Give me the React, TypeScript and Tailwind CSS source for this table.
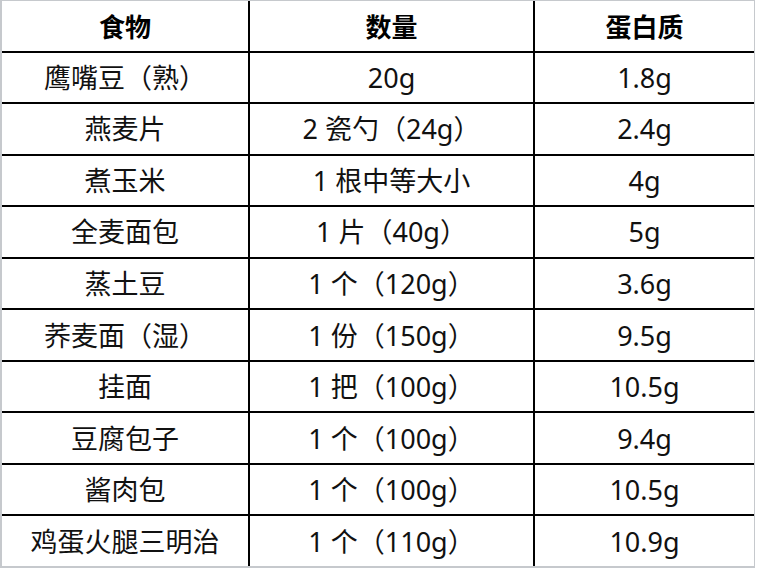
import React from "react";

const rows: [string, string, string][] = [
  ["鹰嘴豆（熟）", "20g", "1.8g"],
  ["燕麦片", "2 瓷勺（24g）", "2.4g"],
  ["煮玉米", "1 根中等大小", "4g"],
  ["全麦面包", "1 片（40g）", "5g"],
  ["蒸土豆", "1 个（120g）", "3.6g"],
  ["荞麦面（湿）", "1 份（150g）", "9.5g"],
  ["挂面", "1 把（100g）", "10.5g"],
  ["豆腐包子", "1 个（100g）", "9.4g"],
  ["酱肉包", "1 个（100g）", "10.5g"],
  ["鸡蛋火腿三明治", "1 个（110g）", "10.9g"],
];

export default function App() {
  return (
    <div className="w-[759px] h-[571px] bg-white">
      <div className="w-[755px] h-[568px] border-l-2 border-t border-r border-b-2 border-[#c6c9cd] bg-white">
        <div className="grid grid-cols-[246px_283px_219px] grid-rows-[repeat(11,1fr)] gap-[2px] bg-black h-full text-black">
          {["食物", "数量", "蛋白质"].map((h) => (
            <div
              key={h}
              className="bg-white flex items-center justify-center text-[26px] font-bold leading-none font-['Noto_Sans_CJK_SC',sans-serif]"
            >
              {h}
            </div>
          ))}
          {rows.map((r, i) => (
            <React.Fragment key={i}>
              {r.map((c, j) => (
                <div
                  key={j}
                  className="bg-white flex items-center justify-center text-[27px] leading-none text-[#111] font-['Noto_Sans','Noto_Sans_CJK_SC',sans-serif]"
                >
                  {c}
                </div>
              ))}
            </React.Fragment>
          ))}
        </div>
      </div>
    </div>
  );
}
